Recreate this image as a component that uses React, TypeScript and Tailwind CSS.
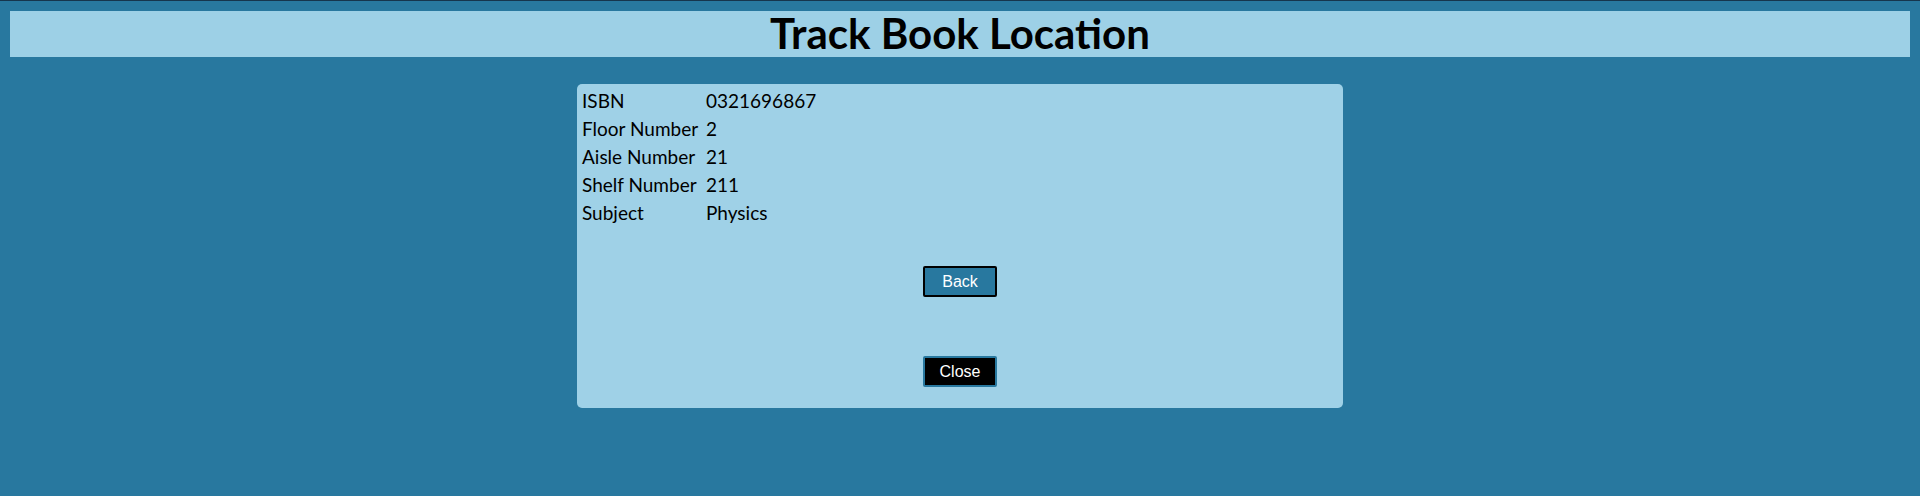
import React from "react";

const rows: [string, string][] = [
  ["ISBN", "0321696867"],
  ["Floor Number", "2"],
  ["Aisle Number", "21"],
  ["Shelf Number", "211"],
  ["Subject", "Physics"],
];

const TrackBookLocation = () => {
  return (
    <div className="min-h-[496px] border-t border-[#16354d] bg-[#28789f] px-[10px] pt-[10px] pb-8">
      <div className="flex h-[46px] items-center justify-center bg-[#9dd0e6]">
        <h1 className="-mt-[2px] font-['Lato',sans-serif] text-[42px] font-bold leading-none text-black">
          Track Book Location
        </h1>
      </div>

      <div className="mx-auto mt-[27px] flex w-[766px] flex-col rounded-[5px] bg-[#9fd1e7] px-[5px] pt-[3px] pb-[21px]">
        <table className="font-['Lato',sans-serif] text-[19px] leading-[28px] text-black">
          <tbody>
            {rows.map(([label, value]) => (
              <tr key={label} className="h-[28px]">
                <td className="w-[124px] p-0">{label}</td>
                <td className="p-0">{value}</td>
              </tr>
            ))}
          </tbody>
        </table>

        <div className="mt-[39px] flex flex-col items-center gap-[59px]">
          <button className="h-[31px] w-[74px] rounded-[2px] border-2 border-black bg-[#28789f] font-['Liberation_Sans',sans-serif] text-[16px] text-white">
            Back
          </button>
          <button className="h-[31px] w-[74px] rounded-[2px] border-2 border-[#28789f] bg-black font-['Liberation_Sans',sans-serif] text-[16px] text-white">
            Close
          </button>
        </div>
      </div>
    </div>
  );
};

export default function App() {
  return <TrackBookLocation />;
}
